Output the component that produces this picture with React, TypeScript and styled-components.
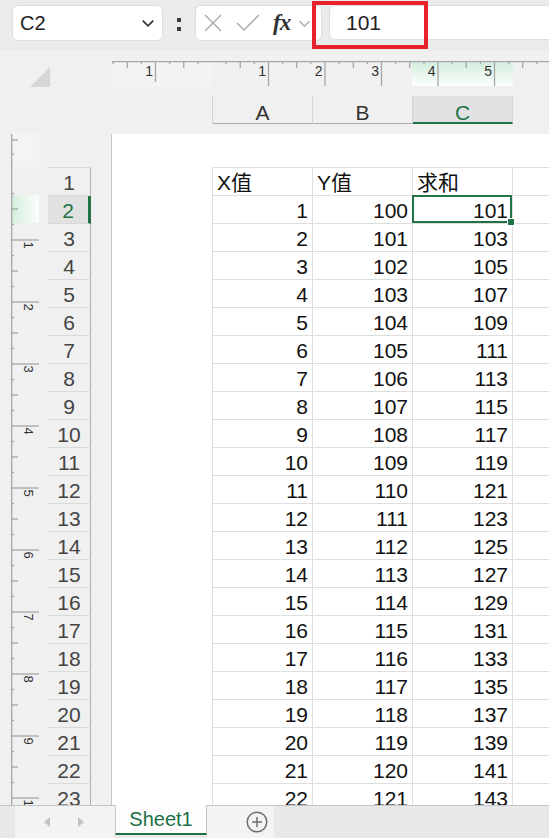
import React from "react";
import styled, { createGlobalStyle } from "styled-components";

const GREEN = "#217346";

const GlobalStyle = createGlobalStyle`
  html, body {
    margin: 0;
    padding: 0;
  }
  body {
    font-family: "Liberation Sans", "Noto Sans CJK SC", sans-serif;
    background: #f0f0f0;
  }
`;

const Window = styled.div`
  position: relative;
  width: 549px;
  height: 838px;
  display: flex;
  flex-direction: column;
  overflow: hidden;
  background: #f0f0f0;
`;

/* ---------- formula bar ---------- */

const Toolbar = styled.div`
  flex: none;
  height: 50px;
  box-sizing: border-box;
  display: flex;
  align-items: flex-start;
  padding: 5px 0 0 12px;
  background: #e9eceb;
`;

const NameBox = styled.div`
  flex: none;
  width: 151px;
  height: 36px;
  box-sizing: border-box;
  display: flex;
  align-items: center;
  justify-content: space-between;
  padding: 0 7px 0 7px;
  background: #fff;
  border: 1px solid #dcdfde;
  border-radius: 6px;
  font-size: 20px;
  color: #222;
`;

const Grip = styled.div`
  flex: none;
  width: 32px;
  height: 36px;
  display: flex;
  flex-direction: column;
  align-items: center;
  justify-content: center;
  gap: 5px;
  padding-top: 3px;
  box-sizing: border-box;

  &::before,
  &::after {
    content: "";
    width: 4px;
    height: 4px;
    background: #3a3a3a;
  }
`;

const FxBox = styled.div`
  flex: none;
  width: 127px;
  height: 36px;
  box-sizing: border-box;
  display: flex;
  align-items: center;
  padding-left: 7px;
  background: #fff;
  border: 1px solid #dcdfde;
  border-radius: 6px;
`;

const FxIcon = styled.span`
  margin: 0 8px 0 13px;
  font-family: "Liberation Serif", serif;
  font-style: italic;
  font-weight: bold;
  font-size: 23px;
  color: #333;
  letter-spacing: -1px;
`;

const FormulaInput = styled.div`
  flex: 1;
  height: 35px;
  margin: 0 -12px 0 7px;
  box-sizing: border-box;
  display: flex;
  align-items: center;
  padding-left: 16px;
  background: #fff;
  border: 1px solid #dcdfde;
  border-radius: 6px;
  font-size: 21px;
  color: #222;
`;

const Highlight = styled.div`
  position: absolute;
  left: 312px;
  top: 1px;
  width: 116px;
  height: 48px;
  box-sizing: border-box;
  border: 4px solid #e8222a;
  pointer-events: none;
`;

/* ---------- workspace ---------- */

const Workspace = styled.div`
  flex: 1;
  min-height: 0;
  display: grid;
  grid-template-columns: 112px 1fr;
  grid-template-rows: 84px 1fr;
  overflow: hidden;
`;

const Corner = styled.div`
  padding: 17px 0 0 30px;

  &::before {
    content: "";
    display: block;
    width: 0;
    height: 0;
    border-left: 20px solid transparent;
    border-bottom: 20px solid #d6d6d6;
  }
`;

const TopStrip = styled.div`
  display: flex;
  flex-direction: column;
  overflow: hidden;
  padding-top: 11px;
`;

const HeaderRow = styled.div`
  display: flex;
  margin: 9px 0 0 100px;
  border-left: 1px solid #d4d4d4;
`;

const ColHeader = styled.div<{ $active?: boolean }>`
  flex: none;
  width: 100px;
  height: 28px;
  box-sizing: border-box;
  padding-top: 6px;
  line-height: 22px;
  text-align: center;
  font-size: 21px;
  color: ${(p) => (p.$active ? GREEN : "#333")};
  background: ${(p) => (p.$active ? "#e1e1e1" : "transparent")};
  border-right: 1px solid #d4d4d4;
  border-bottom: ${(p) => (p.$active ? `2px solid ${GREEN}` : "1px solid #ababab")};
`;

const LeftPane = styled.div`
  display: flex;
  align-items: flex-start;
  padding-left: 11px;
  overflow: hidden;
`;

const RowHeaders = styled.div`
  flex: none;
  width: 43px;
  margin: 33px 0 0 8px;
  border-top: 1px solid #dadada;
`;

const RowHeader = styled.div<{ $active?: boolean }>`
  height: 28px;
  box-sizing: border-box;
  padding-top: 3px;
  line-height: 24px;
  text-align: center;
  font-size: 21px;
  color: ${(p) => (p.$active ? GREEN : "#444")};
  background: ${(p) => (p.$active ? "#e1e1e1" : "transparent")};
  border-bottom: 1px solid #dadada;
  border-right: ${(p) => (p.$active ? `3px solid ${GREEN}` : "1px solid #b0b0b0")};
`;

const Page = styled.div`
  background: #fff;
  box-shadow: -1px 0 0 #c6c6c6;
  overflow: hidden;
  padding: 33px 0 0 100px;
`;

const DataGrid = styled.div`
  width: max-content;
  border-left: 1px solid #dedede;
  border-top: 1px solid #dedede;
`;

const Row = styled.div`
  display: flex;
`;

const Cell = styled.div<{ $align?: "left" | "right"; $selected?: boolean }>`
  position: relative;
  flex: none;
  width: 100px;
  height: 28px;
  box-sizing: border-box;
  padding: 3px 4px 0 4px;
  line-height: 24px;
  font-size: 21px;
  color: #111;
  text-align: ${(p) => p.$align ?? "right"};
  white-space: nowrap;
  border-right: 1px solid #dedede;
  border-bottom: 1px solid #dedede;

  ${(p) =>
    p.$selected &&
    `
    &::after {
      content: "";
      position: absolute;
      left: -1px;
      top: -1px;
      right: 0;
      bottom: 0;
      border: 2px solid ${GREEN};
    }
    &::before {
      content: "";
      position: absolute;
      right: -2px;
      bottom: -2px;
      width: 6px;
      height: 6px;
      background: ${GREEN};
      box-shadow: 0 0 0 1px #fff;
      z-index: 2;
    }
  `}
`;

/* ---------- sheet tabs ---------- */

const TabBar = styled.div`
  flex: none;
  height: 33px;
  box-sizing: border-box;
  display: flex;
  border-top: 1px solid #c6c6c6;
  background: #e6e9e8;
`;

const TabNav = styled.div`
  flex: none;
  width: 100px;
  margin-left: 15px;
  display: flex;
  align-items: center;
  gap: 28px;
  padding-left: 29px;
  box-sizing: border-box;
  background: #f3f3f3;
`;

const Arrow = styled.span<{ $dir: "left" | "right" }>`
  width: 0;
  height: 0;
  border-top: 5px solid transparent;
  border-bottom: 5px solid transparent;
  ${(p) =>
    p.$dir === "left"
      ? "border-right: 6px solid #c4c4c4;"
      : "border-left: 6px solid #c4c4c4;"}
`;

const SheetTab = styled.div`
  flex: none;
  width: 92px;
  margin: -1px 0 3px;
  box-sizing: border-box;
  display: flex;
  align-items: center;
  justify-content: center;
  padding-top: 1px;
  background: #fdfdfd;
  border-left: 1px solid #c6c6c6;
  border-right: 1px solid #c6c6c6;
  border-bottom: 2px solid ${GREEN};
  font-size: 20px;
  color: #1e7145;
`;

const AddArea = styled.div`
  flex: none;
  width: 67px;
  display: flex;
  align-items: center;
  padding-left: 39px;
  box-sizing: border-box;
  background: #f3f3f3;
`;

/* ---------- rulers ---------- */

const HRuler = () => {
  const ticks: React.ReactNode[] = [];
  for (let j = -7; j <= 24; j++) {
    if (j === 0) continue;
    const x = 100 + j * 14.125;
    if (x < 1 || x > 437) continue;
    const major = j % 4 === 0;
    const len = major ? (j < 0 ? 21 : 25) : j % 2 === 0 ? 7 : 3;
    ticks.push(<line key={j} x1={x} x2={x} y1={0} y2={len} />);
    if (major) {
      ticks.push(
        <text key={`t${j}`} x={x - 2.5} y={15} textAnchor="end" stroke="none">
          {Math.abs(j / 4)}
        </text>
      );
    }
  }
  return (
    <svg width="437" height="26" style={{ display: "block", flex: "none" }}>
      <defs>
        <linearGradient id="hsel" x1="0" y1="0" x2="0" y2="1">
          <stop offset="0" stopColor="#d2eedc" />
          <stop offset="1" stopColor="#fbfefc" />
        </linearGradient>
      </defs>
      <rect x="0" y="0" width="100" height="26" fill="#f3f3f3" />
      <rect x="300" y="0" width="101" height="25" fill="url(#hsel)" />
      <g stroke="#a6a6a6" strokeWidth="1.3" fill="#333" fontSize="14" fontFamily="Liberation Sans, sans-serif">
        <line x1="0" x2="437" y1="0.7" y2="0.7" />
        {ticks}
      </g>
    </svg>
  );
};

const VRuler = () => {
  const ticks: React.ReactNode[] = [
    <line key="m1" x1={0} x2={7} y1={6} y2={6} />,
    <line key="m2" x1={0} x2={3} y1={20} y2={20} />,
  ];
  for (let j = -3; j <= 36; j++) {
    const y = 106 + j * 15.5;
    if (y > 671) continue;
    const major = j % 4 === 0;
    const len = major ? 28 : j % 2 === 0 ? 7 : 3;
    ticks.push(<line key={j} x1={0} x2={len} y1={y} y2={y} />);
    if (major) {
      ticks.push(
        <text key={`t${j}`} transform={`translate(13 ${y + 1.5}) rotate(90)`} stroke="none">
          {j / 4 + 1}
        </text>
      );
    }
  }
  return (
    <svg width="29" height="671" style={{ display: "block", flex: "none" }}>
      <defs>
        <linearGradient id="vsel" x1="0" y1="0" x2="1" y2="0">
          <stop offset="0" stopColor="#d2eedc" />
          <stop offset="1" stopColor="#fbfefc" />
        </linearGradient>
      </defs>
      <rect x="0" y="0" width="28" height="33" fill="#f4f4f4" />
      <rect x="0" y="61" width="28" height="28" fill="url(#vsel)" />
      <g stroke="#a6a6a6" strokeWidth="1.3" fill="#333" fontSize="13" fontFamily="Liberation Sans, sans-serif">
        <line x1="0.7" x2="0.7" y1="0" y2="671" />
        {ticks}
      </g>
    </svg>
  );
};

/* ---------- icons ---------- */

const Chevron = ({ color, size }: { color: string; size: number }) => (
  <svg width={size} height={size} viewBox="0 0 12 12" style={{ flex: "none" }}>
    <path d="M1.5 4 L6 8.5 L10.5 4" fill="none" stroke={color} strokeWidth="1.4" />
  </svg>
);

const CrossIcon = () => (
  <svg width="20" height="20" viewBox="0 0 20 20" style={{ flex: "none" }}>
    <path d="M2 2 L18 18 M18 2 L2 18" stroke="#a9a9a9" strokeWidth="1.4" fill="none" />
  </svg>
);

const CheckIcon = () => (
  <svg width="24" height="20" viewBox="0 0 24 20" style={{ flex: "none", marginLeft: 13 }}>
    <path d="M1 10 L8 17 L23 2" stroke="#a9a9a9" strokeWidth="1.4" fill="none" />
  </svg>
);

const PlusIcon = () => (
  <svg width="22" height="22" viewBox="0 0 22 22">
    <circle cx="11" cy="11" r="9.8" fill="none" stroke="#6f6f6f" strokeWidth="1.5" />
    <path d="M11 6 V16 M6 11 H16" stroke="#6f6f6f" strokeWidth="1.5" />
  </svg>
);

const data = Array.from({ length: 22 }, (_, i) => {
  const x = i + 1;
  return { x, y: 99 + x, sum: 99 + 2 * x };
});

const rowNumbers = Array.from({ length: 24 }, (_, i) => i + 1);

const App = () => {
  return (
    <Window>
      <GlobalStyle />
      <Toolbar>
        <NameBox>
          <span>C2</span>
          <Chevron color="#333" size={14} />
        </NameBox>
        <Grip />
        <FxBox>
          <CrossIcon />
          <CheckIcon />
          <FxIcon>fx</FxIcon>
          <Chevron color="#b0b0b0" size={13} />
        </FxBox>
        <FormulaInput>101</FormulaInput>
      </Toolbar>
      <Highlight />

      <Workspace>
        <Corner />
        <TopStrip>
          <HRuler />
          <HeaderRow>
            <ColHeader>A</ColHeader>
            <ColHeader>B</ColHeader>
            <ColHeader $active>C</ColHeader>
          </HeaderRow>
        </TopStrip>
        <LeftPane>
          <VRuler />
          <RowHeaders>
            {rowNumbers.map((n) => (
              <RowHeader key={n} $active={n === 2}>
                {n}
              </RowHeader>
            ))}
          </RowHeaders>
        </LeftPane>
        <Page>
          <DataGrid>
            <Row>
              <Cell $align="left">X值</Cell>
              <Cell $align="left">Y值</Cell>
              <Cell $align="left">求和</Cell>
              <Cell />
            </Row>
            {data.map((d, i) => (
              <Row key={d.x}>
                <Cell>{d.x}</Cell>
                <Cell>{d.y}</Cell>
                <Cell $selected={i === 0}>{d.sum}</Cell>
                <Cell />
              </Row>
            ))}
          </DataGrid>
        </Page>
      </Workspace>

      <TabBar>
        <TabNav>
          <Arrow $dir="left" />
          <Arrow $dir="right" />
        </TabNav>
        <SheetTab>Sheet1</SheetTab>
        <AddArea>
          <PlusIcon />
        </AddArea>
      </TabBar>
    </Window>
  );
};

export default App;
